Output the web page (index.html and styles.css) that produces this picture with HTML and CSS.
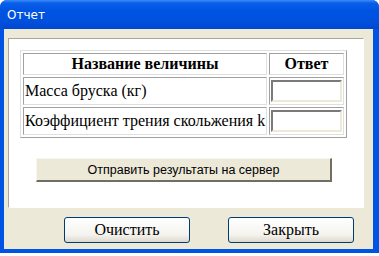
FILE: index.html
```html
<!DOCTYPE html>
<html>
<head>
<meta charset="utf-8">
<link rel="stylesheet" href="styles.css">
</head>
<body>
<div class="window">
  <div class="titlebar"><span class="title">Отчет</span></div>
  <div class="client">
    <div class="panel">
      <table class="grid">
        <tr><th class="c1">Название величины</th><th class="c2">Ответ</th></tr>
        <tr><td class="c1">Масса бруска (кг)</td><td class="c2"><span class="field"></span></td></tr>
        <tr><td class="c1">Коэффициент трения скольжения k</td><td class="c2"><span class="field"></span></td></tr>
      </table>
      <div class="sendrow"><button class="send">Отправить результаты на сервер</button></div>
    </div>
    <div class="buttons">
      <button class="xp">Очистить</button>
      <button class="xp">Закрыть</button>
    </div>
  </div>
</div>
</body>
</html>
```
FILE: styles.css
```css
html, body { margin: 0; padding: 0; background: #ffffff; }
body { width: 379px; height: 256px; overflow: hidden; }
.window {
  width: 379px; height: 253px; box-sizing: border-box;
  background: #0054e3;
  border-radius: 7px 7px 0 0;
  display: flex; flex-direction: column;
  padding: 0 6px 4px 4px;
}
.titlebar {
  height: 29px; margin: 0 -6px 0 -4px;
  background: linear-gradient(#3c8cf8 0px, #0a5fe8 3px, #0054e3 10px, #0050dc 22px, #0046d0 29px);
  border-radius: 7px 7px 0 0;
  display: flex; align-items: center; padding-left: 7px;
}
.title { color: #fff; font-family: "DejaVu Sans", sans-serif; font-size: 12px; }
.client { flex: 1; background: #ece9d8; display: flex; flex-direction: column; padding: 9px 9px 0 4px; }
.panel {
  height: 170px; box-sizing: border-box;
  background: #fff;
  border: 1px solid; border-color: #a9a69b #fff #fff #a9a69b;
  padding: 11px 0 0 11px;
}
.grid {
  border-collapse: separate; border-spacing: 2px;
  border: 1px solid; border-color: #dfdfdf #a0a0a0 #a0a0a0 #dfdfdf;
  font-family: "Liberation Serif", serif; font-size: 16px; color: #000;
}
.grid th, .grid td {
  border: 1px solid; border-color: #a0a0a0 #dfdfdf #dfdfdf #a0a0a0;
  padding: 0; white-space: nowrap;
}
.grid th { font-weight: bold; height: 20px; }
.grid td { height: 26px; }
.grid td.c1 { width: 241px; padding-left: 1px; }
.grid td.c2 { width: 73px; }
.field {
  display: block; width: 71px; height: 22px; box-sizing: border-box; margin-left: 1px;
  border: 2px solid; border-color: #7a7a7a #ece9d8 #ece9d8 #7a7a7a;
  background: #fff;
}
.sendrow { padding: 20px 0 0 16px; }
.send {
  width: 296px; height: 24px; box-sizing: border-box;
  background: #ece9d8; border: none;
  border-left: 1px solid #f6f5ee; border-top: 1px solid #f6f5ee;
  border-right: 2px solid #716f64; border-bottom: 2px solid #716f64;
  font-family: "Liberation Sans", sans-serif; font-size: 12.5px; color: #000;
  padding: 0;
}
.buttons { display: flex; padding: 9px 0 0 56px; gap: 38px; }
.xp {
  width: 126px; height: 26px; box-sizing: border-box;
  border: 1px solid #003c74; border-radius: 3px;
  background: linear-gradient(#ffffff, #f4f3ee 70%, #dcd9cd);
  font-family: "Liberation Serif", serif; font-size: 16px; color: #000; padding: 0;
}
```
